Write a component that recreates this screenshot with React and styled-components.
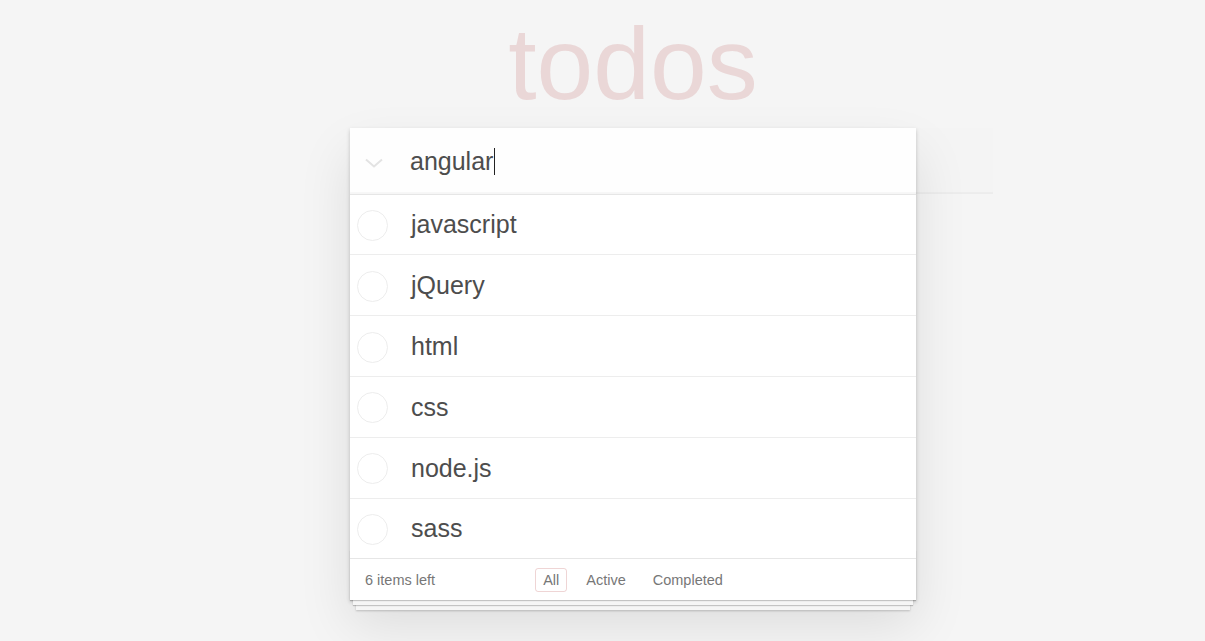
import React from "react";
import styled, { createGlobalStyle } from "styled-components";

const todos = ["javascript", "jQuery", "html", "css", "node.js", "sass"];
const filters = ["All", "Active", "Completed"];

function App() {
  return (
    <>
      <GlobalStyle />
      <Page>
        <Title>todos</Title>
        <Card>
          <Header>
            <NewTodo>
              <ToggleAll>
                <svg width="18" height="10" viewBox="0 0 18 10">
                  <path d="M1 1.5 L9 8.5 L17 1.5" fill="none" stroke="#e3e3e3" strokeWidth="2" />
                </svg>
              </ToggleAll>
              <span>angular</span>
              <Caret />
            </NewTodo>
          </Header>
          <Main>
            {todos.map((t) => (
              <Item key={t}>
                <ToggleBox>
                  <Circle />
                </ToggleBox>
                <Label>{t}</Label>
              </Item>
            ))}
          </Main>
          <Footer>
            <Count>6 items left</Count>
            <Filters>
              {filters.map((f) => (
                <FilterLink key={f} selected={f === "All"}>
                  {f}
                </FilterLink>
              ))}
            </Filters>
            <span />
          </Footer>
        </Card>
      </Page>
    </>
  );
}

export default App;

const GlobalStyle = createGlobalStyle`
  html, body {
    margin: 0;
    background: #f5f5f5;
  }
  body {
    min-height: 641px;
    font: 14px "Liberation Sans", Arial, sans-serif;
    color: #4d4d4d;
  }
`;

const Page = styled.div`
  width: 566px;
  margin-left: 350px;
  padding-bottom: 40px;
`;

const Title = styled.h1`
  margin: 0;
  height: 128px;
  line-height: 128px;
  text-align: center;
  font-size: 102px;
  font-weight: 400;
  color: rgba(175, 47, 47, 0.15);
`;

const Card = styled.section`
  position: relative;
  isolation: isolate;
  background: #fff;
  box-shadow: 0 2px 4px 0 rgba(0, 0, 0, 0.2), 0 25px 50px 0 rgba(0, 0, 0, 0.1);
`;

const Header = styled.header`
  position: relative;
`;

const NewTodo = styled.div`
  box-sizing: border-box;
  width: 643px;
  height: 65.6px;
  display: flex;
  align-items: center;
  padding: 17px 16px 15px 0;
  font-size: 25px;
  line-height: 33.6px;
  color: #4d4d4d;
  background: rgba(0, 0, 0, 0.004);
  box-shadow: inset 0 -2px 1px rgba(0, 0, 0, 0.03);
`;

const ToggleAll = styled.div`
  width: 60px;
  padding-left: 15px;
  box-sizing: border-box;
  display: flex;
  align-items: center;
  padding-top: 2px;
`;

const Caret = styled.span`
  width: 1px;
  height: 27px;
  background: #222;
  margin-left: 1px;
`;

const Main = styled.ul`
  margin: 0;
  padding: 0;
  list-style: none;
  border-top: 1px solid #e6e6e6;
`;

const Item = styled.li`
  height: 59.8px;
  display: flex;
  align-items: center;
  font-size: 25px;
  border-bottom: 1px solid #ededed;
  &:last-child {
    border-bottom: none;
  }
`;

const ToggleBox = styled.div`
  width: 61px;
  display: flex;
  padding-left: 7px;
  box-sizing: border-box;
  padding-top: 2px;
`;

const Circle = styled.span`
  width: 29px;
  height: 29px;
  border-radius: 50%;
  border: 1px solid #ededed;
`;

const Label = styled.label`
  line-height: 1.2;
  color: #4d4d4d;
`;

const Footer = styled.footer`
  position: relative;
  box-sizing: border-box;
  height: 42px;
  padding: 0 15px;
  border-top: 1px solid #e6e6e6;
  color: #777;
  font-size: 14.5px;
  display: grid;
  grid-template-columns: 1fr auto 1fr;
  align-items: center;
  &::before {
    content: "";
    position: absolute;
    left: 0;
    right: 0;
    bottom: 0;
    height: 50px;
    z-index: -1;
    box-shadow: 0 1px 1px rgba(0, 0, 0, 0.2), 0 8px 0 -3px #f6f6f6,
      0 9px 1px -3px rgba(0, 0, 0, 0.2), 0 16px 0 -6px #f6f6f6,
      0 17px 2px -6px rgba(0, 0, 0, 0.2);
  }
`;

const Count = styled.span`
  line-height: 20px;
`;

const Filters = styled.ul`
  margin: 0;
  padding: 0;
  list-style: none;
  display: flex;
  gap: 11px;
`;

const FilterLink = styled.li`
  padding: 3px 7px;
  line-height: 16px;
  border-radius: 3px;
  border: 1px solid
    ${(p) => (p.selected ? "rgba(175, 47, 47, 0.2)" : "transparent")};
  color: #777;
`;
